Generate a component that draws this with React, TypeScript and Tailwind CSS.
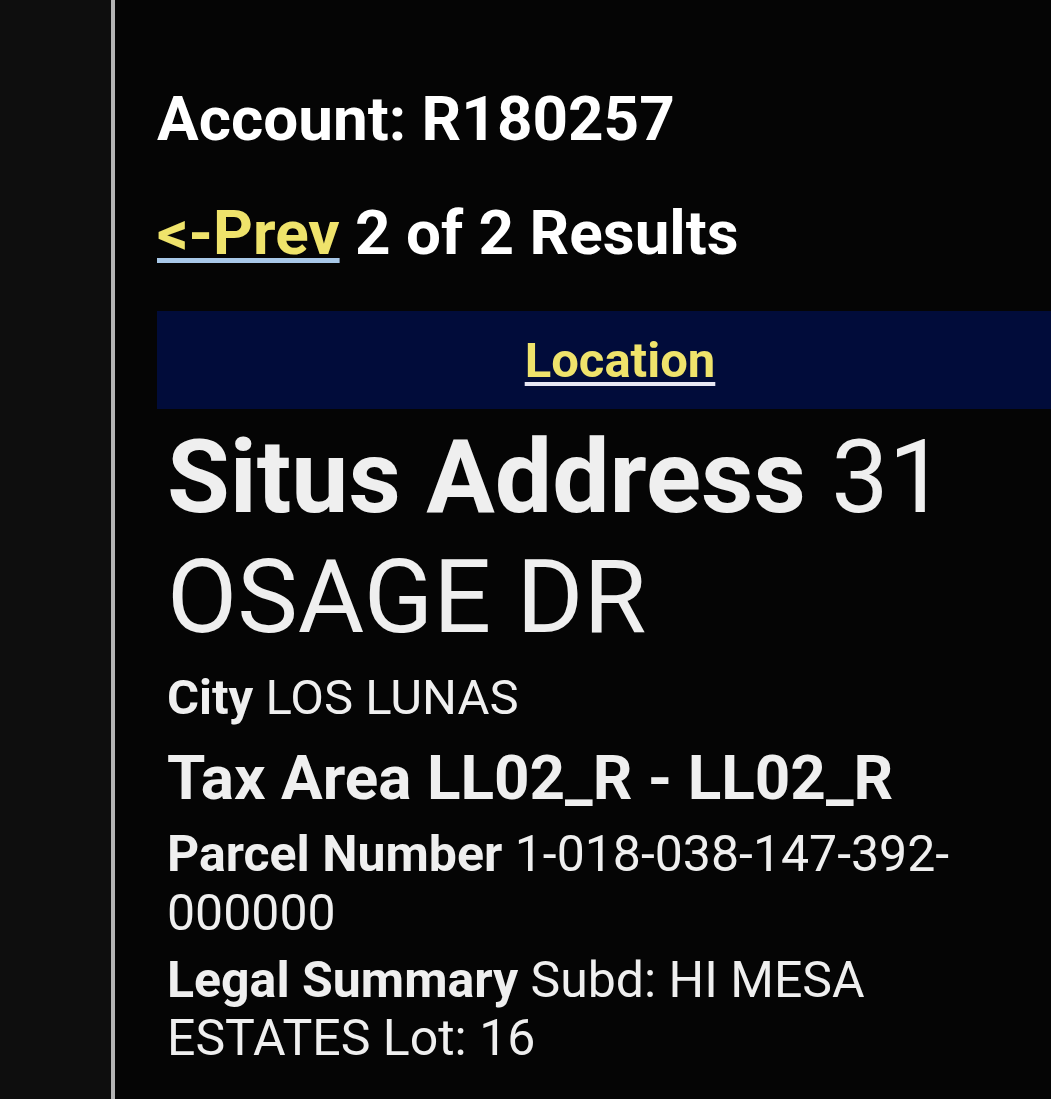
import React from "react";

const details = [
  { label: "City", value: "LOS LUNAS", size: "text-[49px]", mt: "mt-[12px]", allBold: false },
  { label: "Tax Area", value: "LL02_R - LL02_R", size: "text-[62px]", mt: "mt-[15px]", allBold: true },
  { label: "Parcel Number", value: "1-018-038-147-392-000000", size: "text-[50px]", mt: "mt-[11px]", allBold: false },
  { label: "Legal Summary", value: "Subd: HI MESA ESTATES Lot: 16", size: "text-[50px]", mt: "mt-[8px]", allBold: false },
];

export default function App() {
  return (
    <div
      className="flex h-[1099px] w-[1051px] overflow-hidden bg-[#050505]"
      style={{ fontFamily: "Roboto, 'Liberation Sans', sans-serif" }}
    >
      <div className="w-[111px] flex-shrink-0 bg-[#0e0e0e]" />
      <div className="w-[4px] flex-shrink-0 bg-[#b4b4b4]" />

      <div className="flex-shrink-0 pl-[42px] pt-[83px]">
        <h1 className="text-[62px] font-bold leading-[1.172] text-white">Account: R180257</h1>

        <div className="mt-[41px] text-[62px] font-bold leading-[1.172] text-white">
          <a className="text-[#efe36b] underline decoration-[#a8c8e8] decoration-[5px] underline-offset-[4px]">
            &lt;-Prev
          </a>{" "}
          2 of 2 Results
        </div>

        <div className="mt-[42px] flex h-[98px] w-[926px] items-start justify-center bg-[#010c3a] pt-[21px]">
          <a className="text-[49px] font-bold leading-[1.172] text-[#efe36b] underline decoration-[#e8e8f4] decoration-[4px] underline-offset-[5px]">
            Location
          </a>
        </div>

        <div className="w-[800px] pl-[10px] text-[#efefef]">
          <div className="mt-[9px] text-[102px] leading-[1.172]">
            <span className="font-bold">Situs Address</span> 31 OSAGE DR
          </div>

          {details.map((d) => (
            <div key={d.label} className={`${d.size} ${d.mt} leading-[1.172] ${d.allBold ? "font-bold" : ""}`}>
              <span className="font-bold">{d.label}</span> {d.value}
            </div>
          ))}
        </div>
      </div>
    </div>
  );
}
